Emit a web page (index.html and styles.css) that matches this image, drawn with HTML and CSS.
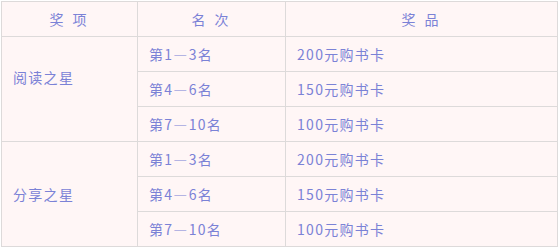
FILE: index.html
```html
<!DOCTYPE html>
<html lang="zh">
<head>
<meta charset="utf-8">
<link rel="stylesheet" href="styles.css">
</head>
<body>
<table class="prize">
  <thead>
    <tr><th class="c1">奖 项</th><th class="c2">名 次</th><th class="c3">奖 品</th></tr>
  </thead>
  <tbody>
    <tr><td rowspan="3" class="group raised">阅读之星</td><td>第1—3名</td><td>200元购书卡</td></tr>
    <tr><td>第4—6名</td><td>150元购书卡</td></tr>
    <tr><td>第7—10名</td><td>100元购书卡</td></tr>
    <tr><td rowspan="3" class="group">分享之星</td><td>第1—3名</td><td>200元购书卡</td></tr>
    <tr><td>第4—6名</td><td>150元购书卡</td></tr>
    <tr><td>第7—10名</td><td>100元购书卡</td></tr>
  </tbody>
</table>
</body>
</html>
```
FILE: styles.css
```css
html, body {
  margin: 0;
  padding: 0;
  background: #ffffff;
}
body {
  padding: 1px 0 0 1px;
}
.prize {
  border-collapse: collapse;
  width: 556px;
  table-layout: fixed;
  background: #fff6f6;
  font-family: "Noto Sans CJK SC", "Noto Sans", sans-serif;
  font-size: 14px;
  color: #7b82d6;
  letter-spacing: 1.3px;
}
.prize th, .prize td {
  border: 1px solid #dddada;
  height: 35px;
  padding: 0 0 0 11px;
  box-sizing: border-box;
  font-weight: normal;
  text-align: left;
  vertical-align: middle;
  line-height: 20px;
}
.prize th {
  text-align: center;
  padding: 0;
  letter-spacing: 3px;
}
.prize td.raised {
  padding-bottom: 25px;
}
.c1 { width: 136px; }
.c2 { width: 148px; }
.c3 { width: 272px; }
```
